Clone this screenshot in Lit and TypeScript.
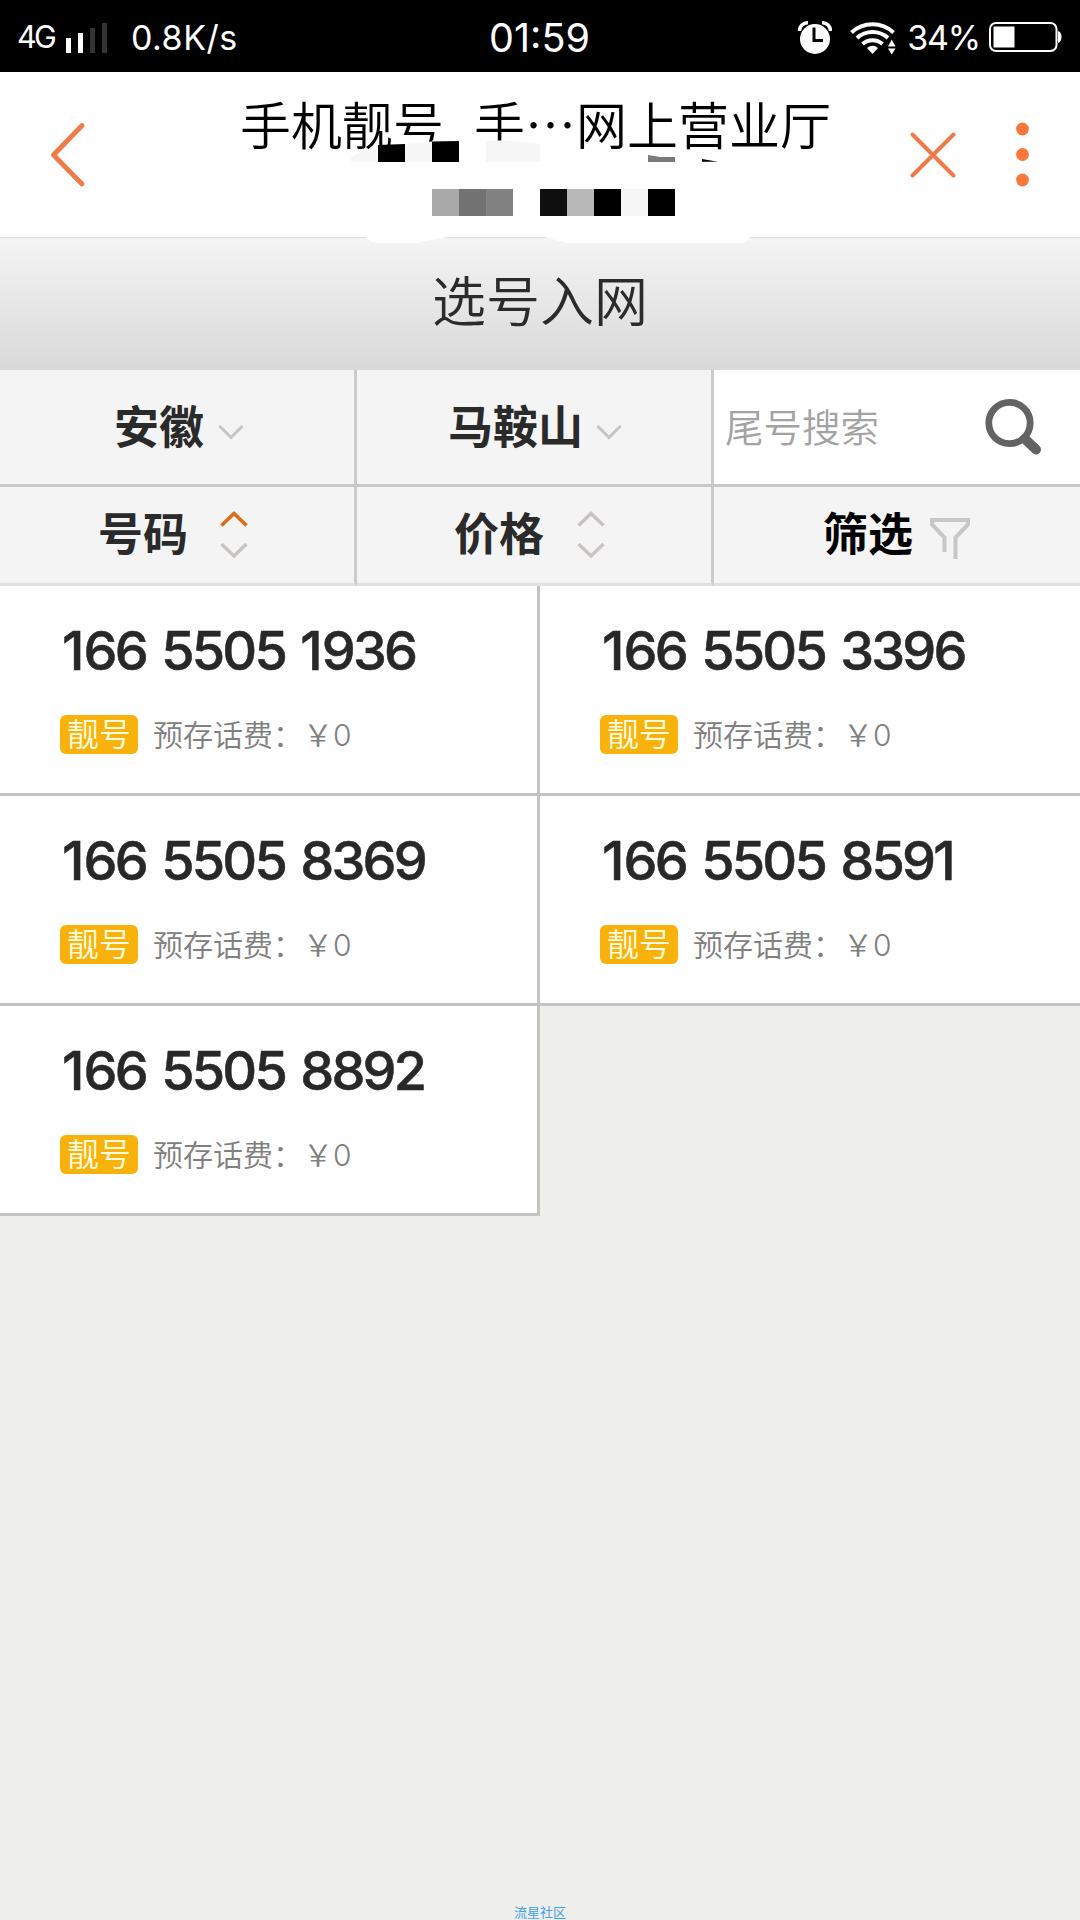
import { LitElement, html, css } from "lit";
import { customElement } from "lit/decorators.js";

const numbers = ["166 5505 1936", "166 5505 3396", "166 5505 8369", "166 5505 8591", "166 5505 8892"];

@customElement("number-card")
class NumberCard extends LitElement {
  static properties = { number: { type: String } };
  declare number: string;
  static styles = css`
    :host { display: block; box-sizing: border-box; height: 210px; padding: 35px 0 0 60px; background: #fefefe; border-bottom: 3px solid #c3c3c3; }
    .num { font: 500 54px/60px Inter, sans-serif; letter-spacing: -2.8px; color: #282828; white-space: pre; padding-left: 2px; -webkit-text-stroke: 0.5px #282828; word-spacing: 3.6px; }
    .one { letter-spacing: -0.9px; }
    .info { display: flex; align-items: center; height: 39px; margin-top: 34px; font-weight: 350; line-height: 39px; }
    .tag { display: flex; justify-content: center; width: 78px; height: 39px; border-radius: 6px; background: #f9b20c; color: #fffde0; font-size: 32px; line-height: 39px; }
    .fee, .price { font-size: 30px; color: #808080; height: 39px; line-height: 41px; }
    .fee { margin-left: 15px; }
    .zero { font-weight: 300; }
  `;
  render() {
    return html`<div class="num">${[...this.number].map((c) => (c === "1" ? html`<span class="one">1</span>` : c))}</div>
      <div class="info"><span class="tag">靓号</span><span class="fee">预存话费：</span><span class="price">￥<span class="zero">0</span></span></div>`;
  }
}

const chevron = html`<svg width="26" height="18" viewBox="0 0 26 18"><path d="M1.5 2 L13 13.5 L24.5 2" fill="none" stroke="#c6c4c4" stroke-width="3"/></svg>`;

const sorter = (up: string) => html`<svg width="28" height="48" viewBox="0 0 28 48">
  <path d="M1.5 14.5 L14 2.5 L26.5 14.5" fill="none" stroke=${up} stroke-width="3.6"/>
  <path d="M1.5 33 L14 45 L26.5 33" fill="none" stroke="#c9c4c2" stroke-width="3.4"/></svg>`;

@customElement("app-root")
class AppRoot extends LitElement {
  static styles = css`
    :host { display: flex; flex-direction: column; width: 1080px; height: 1920px; overflow: hidden; background: #eeeeea; font-family: Inter, "Noto Sans CJK SC", sans-serif; }
    svg { display: block; flex: none; }
    .status { display: grid; grid-template-columns: 1fr auto 1fr; align-items: center; box-sizing: border-box; height: 72px; padding: 3px 18px 0 17px; background: #000; color: #fff; }
    .left, .right { display: flex; align-items: center; }
    .right { justify-content: flex-end; }
    .net { font-size: 30.5px; line-height: 40px; letter-spacing: -2.6px; width: 49px; margin-top: -2px; }
    .speed { font-size: 34px; line-height: 40px; margin-left: 23px; letter-spacing: 0.5px; }
    .time { font-size: 39.5px; line-height: 44px; }
    .pct { font-size: 34px; line-height: 40px; letter-spacing: -1.2px; margin: 0 9px 0 11px; }
    .wifi { margin-left: 18px; }
    .header { position: relative; display: flex; align-items: center; box-sizing: border-box; height: 165px; padding: 0 50px 0 49px; background: #fefefe; }
    .title { flex: 1; align-self: flex-start; display: flex; margin-left: 153px; padding-top: 14px; font-size: 51px; line-height: 74px; color: #000; font-weight: 350; white-space: nowrap; font-family: "Noto Sans CJK SC", sans-serif; }
    .second { margin-left: 30px; }
    .mosaic { position: absolute; left: 340px; top: 58px; }
    .dots { margin-left: 59px; }
    .bar { display: flex; justify-content: center; box-sizing: border-box; height: 133px; border-top: 1px solid #dcdcdc; padding-top: 28px; background: linear-gradient(#f4f4f4, #d9d9d9); color: #2b2b2b; font-size: 54px; line-height: 74px; font-weight: 350; }
    .filters { display: grid; grid-template-columns: 357px 357px 366px; background: #f4f4f4; color: #2a2a2a; font-size: 45px; font-weight: 600; }
    .cell { display: flex; align-items: center; box-sizing: border-box; border-right: 3px solid #cbcbcb; }
    .cell:nth-child(3n) { border-right: 0; }
    .row1 { height: 117px; border-bottom: 3px solid #c8c8c8; padding-bottom: 5px; }
    .row2 { height: 99px; border-bottom: 3px solid #e0e0e0; }
    .city { padding-left: 114px; gap: 14px; }
    .town { padding-left: 91px; gap: 13px; }
    .city svg, .town svg { margin-top: 16px; }
    .search { background: #fff; justify-content: space-between; padding: 0 37px 5px 11px; font-size: 38.5px; font-weight: 350; color: #a3a3a3; }
    .search svg { margin-top: 4px; }
    .code { padding-left: 98px; gap: 32px; }
    .cost { padding-left: 97px; gap: 33px; }
    .sift { padding-left: 109px; gap: 17px; color: #000; }
    .row2 span { margin-top: -7px; }
    .funnel { margin-top: 7px; }
    .grid { display: grid; grid-template-columns: 540px 540px; }
    .grid number-card:nth-child(odd) { border-right: 3px solid #c3c3c3; }
    .mark { margin-top: auto; height: 16px; text-align: center; font-size: 13px; line-height: 16px; color: #3f9fee; }
  `;
  render() {
    return html`
      <div class="status">
        <div class="left">
          <span class="net">4G</span>
          <svg width="42" height="30" viewBox="0 0 42 30"><path d="M0 15h5v15h-5zM12 10h5v20h-5z" fill="#fff"/><path d="M24 5h5v25h-5zM36 0h5v30h-5z" fill="#333"/></svg>
          <span class="speed">0.8K/s</span>
        </div>
        <span class="time">01:59</span>
        <div class="right">
          <svg width="34" height="34" viewBox="0 0 34 34"><circle cx="17" cy="18" r="15" fill="#fff"/><path d="M1.5 10 A8 8 0 0 1 10 1.8 M24 1.8 A8 8 0 0 1 32.5 10" fill="none" stroke="#fff" stroke-width="3.5"/><path d="M16 6.5V19.5H25" fill="none" stroke="#000" stroke-width="3"/></svg>
          <svg class="wifi" width="46" height="34" viewBox="0 0 46 34"><g fill="none" stroke="#fff" stroke-width="4"><path d="M1.5 11.5 A31 31 0 0 1 43.5 11.5"/><path d="M7 17 A23 23 0 0 1 38 17"/><path d="M12.5 23 A15 15 0 0 1 32.5 23"/></g><path d="M17 27 Q22.5 22.5 28 27 L22.5 33Z" fill="#fff"/><path d="M38 25.5L41.7 18.5L45.5 25.5ZM38 27.5L41.7 33.5L45.5 27.5Z" fill="#fff"/></svg>
          <span class="pct">34%</span>
          <svg width="73" height="32" viewBox="0 0 73 32"><rect x="1" y="1" width="66.5" height="28" rx="6" fill="none" stroke="#fff" stroke-width="2"/><path d="M4.5 4.5h21v21h-21z" fill="#fff"/><path d="M69 9q3.5 1 3.5 6t-3.5 6z" fill="#fff"/></svg>
        </div>
      </div>
      <div class="header">
        <svg width="38" height="66" viewBox="0 0 38 66"><path d="M33 3.5L4.5 33L33 62" fill="none" stroke="#f07a48" stroke-width="4.8" stroke-linecap="round" stroke-linejoin="round"/></svg>
        <div class="title"><span>手机靓号</span><span class="second">手…网上营业厅</span></div>
        <svg width="48" height="48" viewBox="0 0 48 48"><path d="M3.5 3.5L44.5 44.5M44.5 3.5L3.5 44.5" stroke="#ef7a4c" stroke-width="4" stroke-linecap="round"/></svg>
        <svg class="dots" width="14" height="66" viewBox="0 0 14 66"><g fill="#f87739"><circle cx="6.5" cy="7" r="6.4"/><circle cx="6.5" cy="32.5" r="6.4"/><circle cx="6.5" cy="58" r="6.4"/></g></svg>
        <svg class="mosaic" width="420" height="115" viewBox="340 130 420 115">
          <path d="M405 144L432 141.5V140.5H545V168H405Z" fill="#fefefe"/>
          <path d="M351 162V158Q362 150 376 148L378 162ZM405 144L432 142V162H405ZM486 141H510L540 144V162H486Z" fill="#f6f6f6"/>
          <path d="M378 145L405 144V162H378ZM432 141.5L459 141V162H432ZM702 159L718 161.7H702Z" fill="#000"/>
          <path d="M648 155L660 157H675V162H648Z" fill="#7a7a7a"/>
          <path d="M432 189h27v27h-27z" fill="#a9a9a9"/><path d="M459 189h27v27h-27z" fill="#727272"/><path d="M486 189h27v27h-27z" fill="#828282"/>
          <path d="M540 189h27v27h-27z" fill="#0f0f0f"/><path d="M567 189h27v27h-27z" fill="#b8b8b8"/><path d="M621 189h27v27h-27z" fill="#f6f6f6"/>
          <path d="M594 189h27v27h-27zM648 189h27v27h-27z" fill="#000"/>
          <path d="M366 236Q370 243 376 243H418Q422 241 448 237V236ZM541 236L567 243H744Q749 241 751 236Z" fill="#fefefe"/>
        </svg>
      </div>
      <div class="bar">选号入网</div>
      <div class="filters">
        <div class="cell row1 city"><span>安徽</span>${chevron}</div>
        <div class="cell row1 town"><span>马鞍山</span>${chevron}</div>
        <div class="cell row1 search"><span>尾号搜索</span>
          <svg width="58" height="58" viewBox="0 0 58 58"><circle cx="24.5" cy="25" r="20.7" fill="none" stroke="#636363" stroke-width="6.8"/><path d="M40 41L51 51.5" stroke="#636363" stroke-width="10" stroke-linecap="round"/></svg>
        </div>
        <div class="cell row2 code"><span>号码</span>${sorter("#e06a18")}</div>
        <div class="cell row2 cost"><span>价格</span>${sorter("#c9c4c2")}</div>
        <div class="cell row2 sift"><span>筛选</span>
          <svg class="funnel" width="40" height="42" viewBox="0 0 40 42"><path d="M14.5 34V19.5L2 6.5V2H38V6.5L25.5 19.5V41" fill="none" stroke="#c8c6c6" stroke-width="4"/></svg>
        </div>
      </div>
      <div class="grid">${numbers.map((n) => html`<number-card .number=${n}></number-card>`)}</div>
      <div class="mark">流星社区</div>`;
  }
}
